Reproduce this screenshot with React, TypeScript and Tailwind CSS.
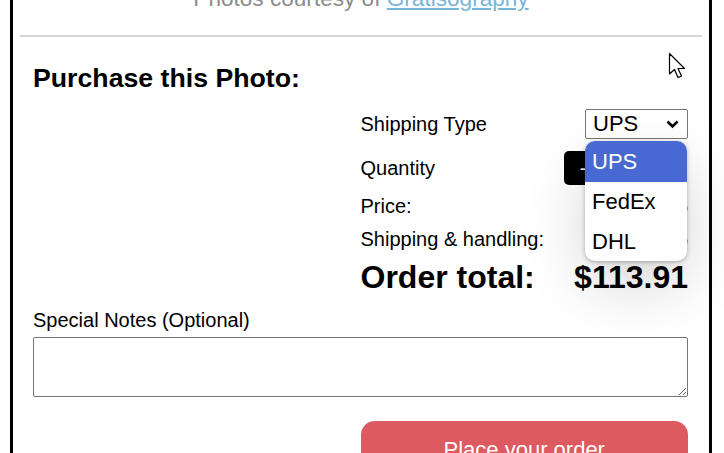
const font = "font-['Liberation_Sans',Arial,sans-serif]";

const Cursor = () => (
  <svg
    className="absolute left-[668px] top-[52px]"
    width="19"
    height="28"
    viewBox="0 0 19 28"
  >
    <path
      d="M1.5 1.5 L1.5 22 L6.5 17.5 L10 25.5 L13.5 24 L10 16.5 L16.5 16.5 Z"
      fill="white"
      stroke="black"
      strokeWidth="1.2"
      strokeLinejoin="round"
    />
  </svg>
);

const Row = ({ label, value }: { label: string; value: string }) => (
  <div className="flex items-center justify-between text-[20px] leading-[23px] text-black">
    <span>{label}</span>
    <span>{value}</span>
  </div>
);

export default function App() {
  return (
    <div className={`relative h-screen overflow-hidden bg-white ${font}`}>
      <div className="ml-[10px] flow-root h-full w-[702px] border-x-[3px] border-black">
        {/* credit line, scrolled partly out of view */}
        <p className="-mt-[13px] text-center text-[22.6px] leading-[23px] text-[#8c8c8c]">
          Photos courtesy of{" "}
          <a href="#" className="text-[#78b6d9] underline">
            Gratisography
          </a>
        </p>

        <div className="mx-[7px] mt-[25px] h-[2px] bg-[#d6d6d6]" />

        <section className="pl-[20px] pr-[21px]">
          <h2 className="mt-[26px] text-[26.7px] font-bold leading-[30px] text-black">
            Purchase this Photo:
          </h2>

          <div className="mt-[16px] grid grid-cols-2">
            <div />
            <div className="flex flex-col">
              {/* Shipping type */}
              <div className="flex h-[30px] items-center justify-between">
                <span className="text-[20px] leading-[23px]">Shipping Type</span>
                <div className="relative">
                  <div className="flex h-[30px] w-[103px] items-center justify-between rounded-[2px] border border-[#767676] pl-[7px] pr-[8px] text-[22px] leading-none">
                    <span>UPS</span>
                    <svg width="13" height="9" viewBox="0 0 13 9">
                      <path
                        d="M1.5 1.5 L6.5 6.5 L11.5 1.5"
                        fill="none"
                        stroke="black"
                        strokeWidth="2.6"
                      />
                    </svg>
                  </div>
                  {/* open dropdown */}
                  <ul className="absolute right-[1px] top-[32px] z-10 w-[102px] overflow-hidden rounded-[10px] bg-white text-[22px] leading-[25px] shadow-[0_1px_4px_rgba(0,0,0,0.3),0_24px_60px_rgba(0,0,0,0.16)]">
                    <li className="flex h-[41px] items-center bg-[#4769d1] px-[7px] text-white">UPS</li>
                    <li className="flex h-[39px] items-center px-[7px]">FedEx</li>
                    <li className="flex h-[40px] items-center px-[7px]">DHL</li>
                  </ul>
                </div>
              </div>

              {/* Quantity */}
              <div className="mt-[12px] flex h-[34px] items-center justify-between">
                <span className="text-[20px] leading-[23px]">Quantity</span>
                <div className="mr-[6px] flex items-center gap-[2px]">
                  <button className="flex h-[34px] w-[38px] items-center justify-center rounded-[5px] bg-black text-[20px] text-white">
                    -
                  </button>
                  <span className="w-[38px] text-center text-[20px]">1</span>
                  <button className="flex h-[34px] w-[38px] items-center justify-center rounded-[5px] bg-black text-[20px] text-white">
                    +
                  </button>
                </div>
              </div>

              <div className="mt-[10px]">
                <Row label="Price:" value="$99.95" />
              </div>
              <div className="mt-[10px]">
                <Row label="Shipping & handling:" value="$13.96" />
              </div>

              <div className="mt-[8px] flex items-center justify-between text-[32px] font-bold leading-[37px]">
                <span>Order total:</span>
                <span>$113.91</span>
              </div>
            </div>
          </div>

          <label className="mt-[13px] block text-[20px] leading-[23px]">
            Special Notes (Optional)
          </label>
          <textarea className="mt-[5px] block h-[60px] w-full resize-y rounded-[2px] border border-[#767676]" />

          <div className="mt-[24px] grid grid-cols-2">
            <div />
            <button className="h-[56px] rounded-[14px] bg-[#dc5a60] text-[22px] text-white">
              Place your order
            </button>
          </div>
        </section>
      </div>
      <Cursor />
    </div>
  );
}
